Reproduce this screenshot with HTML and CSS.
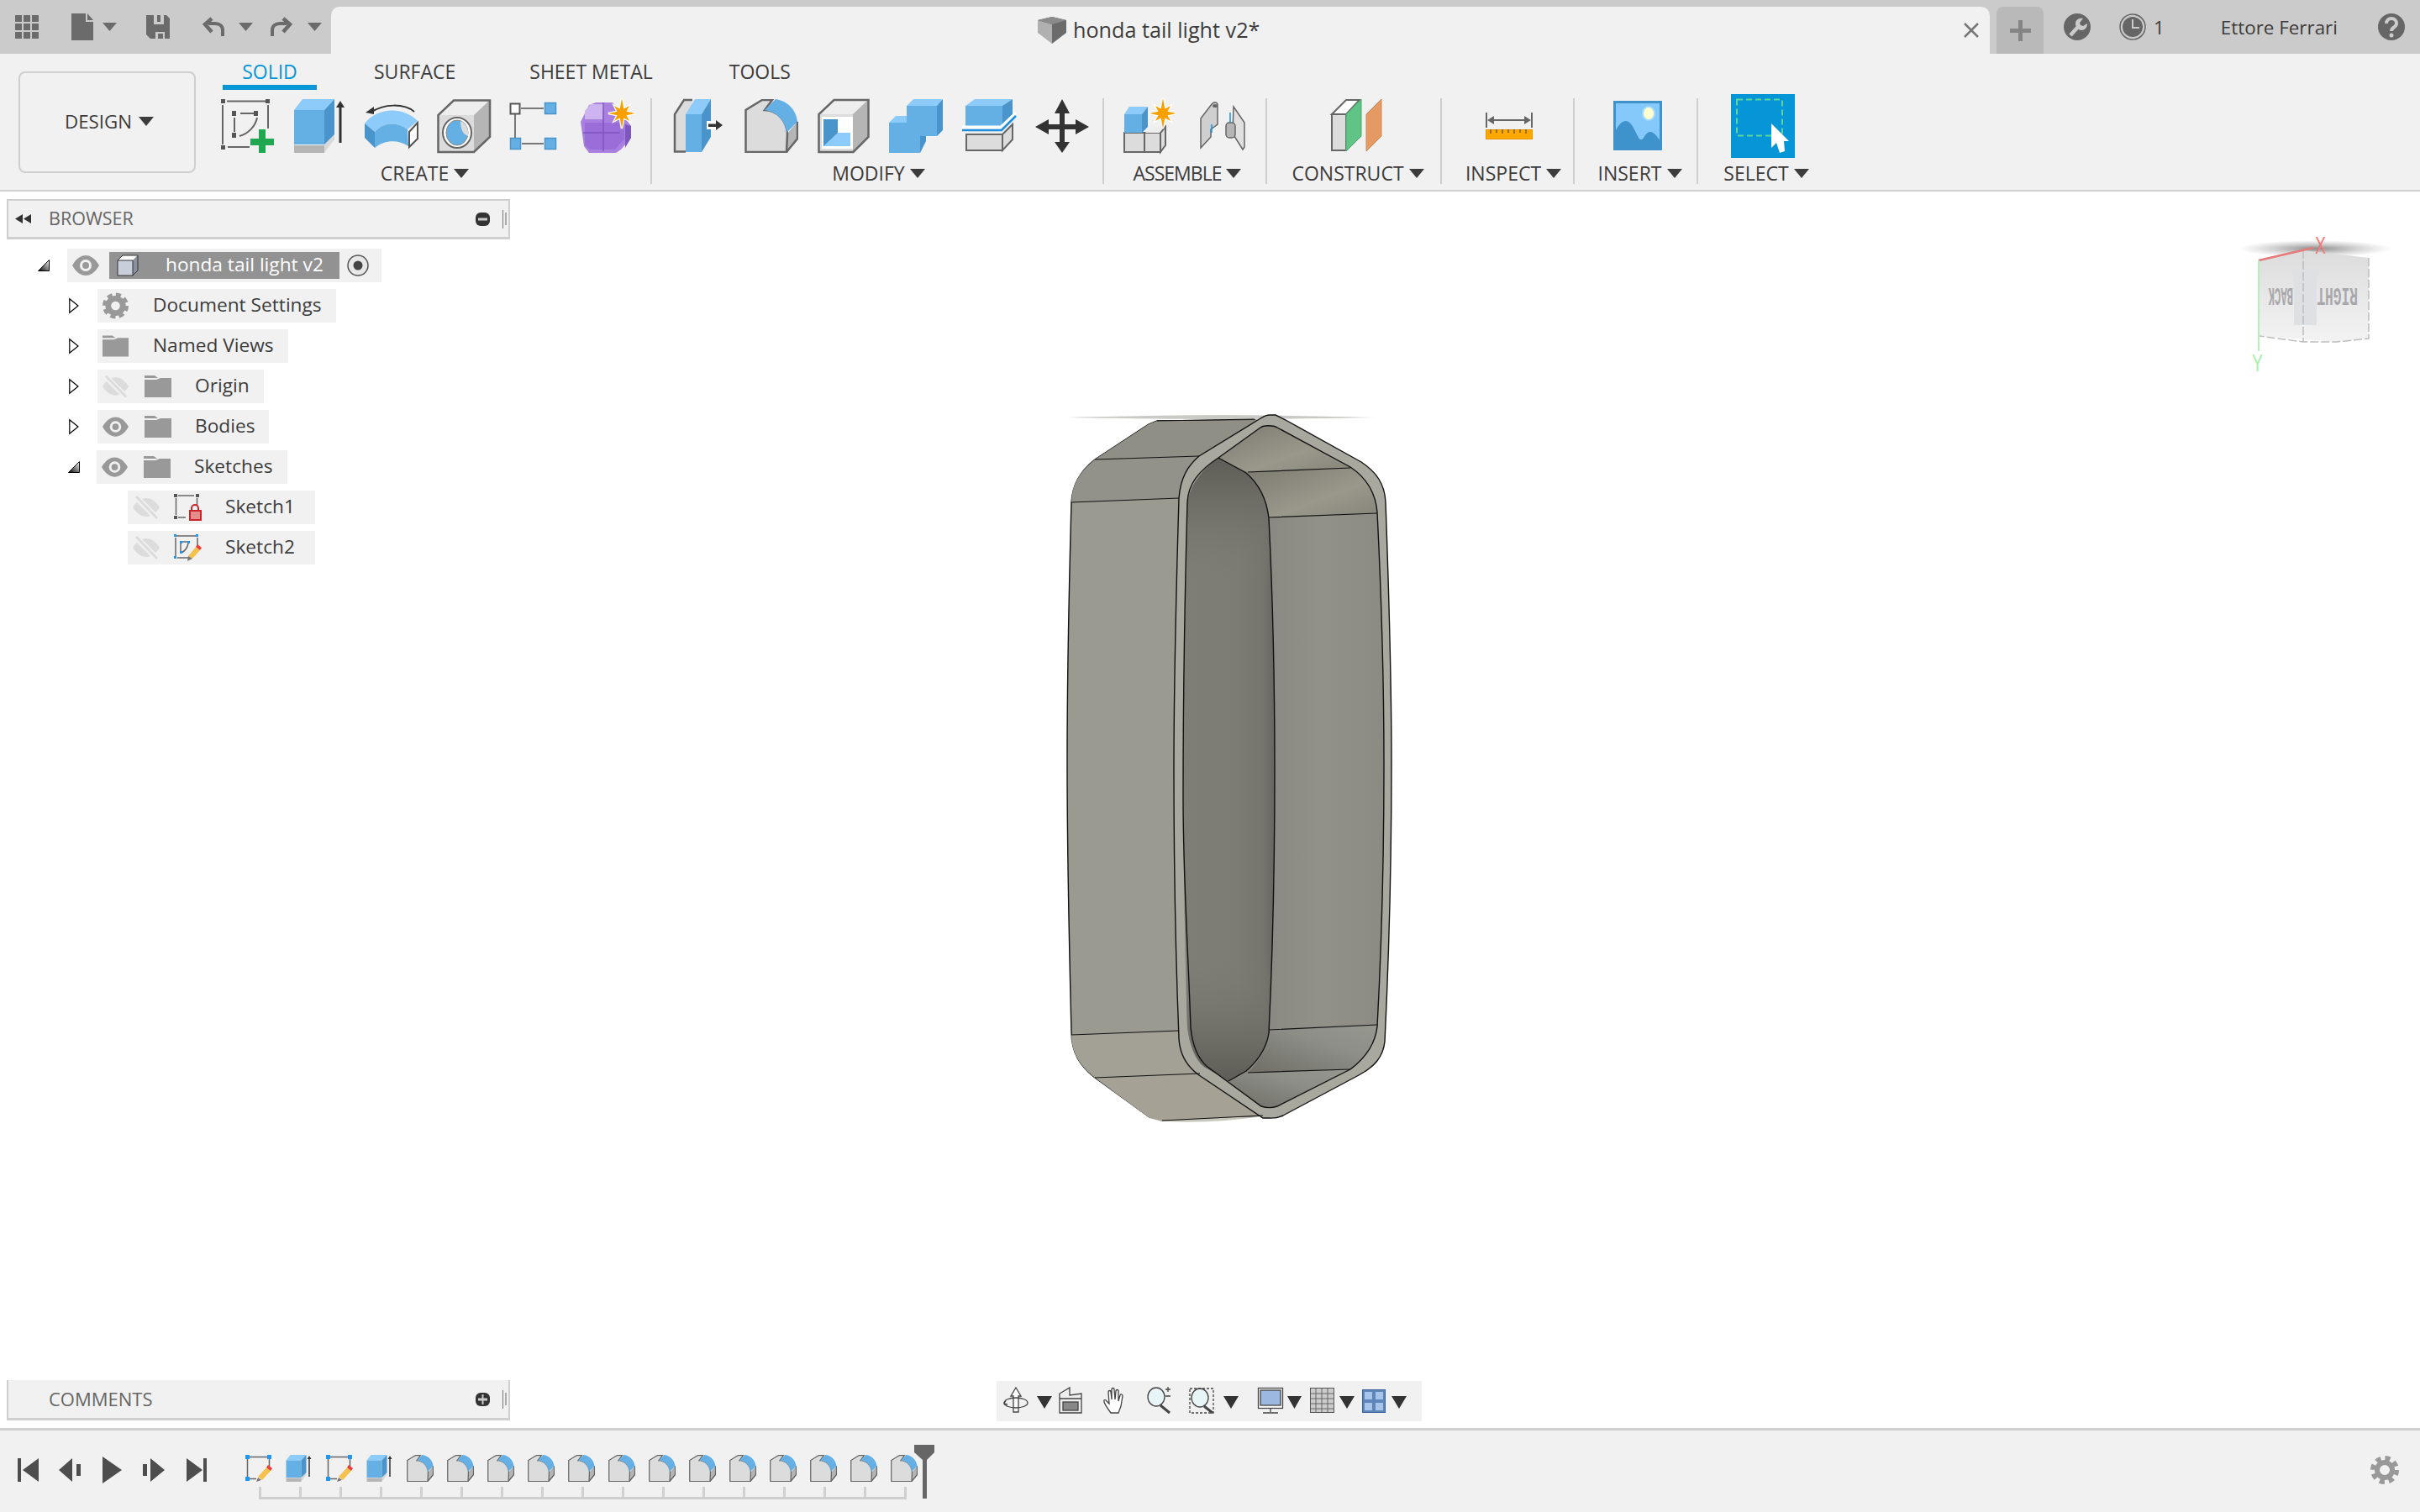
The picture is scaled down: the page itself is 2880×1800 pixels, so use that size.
FILE: index.html
```html
<!DOCTYPE html>
<html lang="en">
<head>
<meta charset="utf-8">
<title>honda tail light v2</title>
<link rel="stylesheet" href="styles.css">
</head>
<body>
<svg class="defs" width="0" height="0" aria-hidden="true">
  <defs>
    <linearGradient id="tri-grad" x1="1" y1="0" x2="0" y2="1"><stop offset="0" stop-color="#fff"/><stop offset="1" stop-color="#000"/></linearGradient>
    <linearGradient id="cyl" x1="0" y1="0" x2="1" y2="0"><stop offset="0" stop-color="#7f7e76"/><stop offset=".6" stop-color="#7d7c74"/><stop offset=".88" stop-color="#75746d"/><stop offset="1" stop-color="#66655f"/></linearGradient>
    <linearGradient id="cylv" x1="0" y1="0" x2="0" y2="1"><stop offset="0" stop-color="#5e5d57"/><stop offset=".07" stop-color="#6e6d66"/><stop offset=".2" stop-color="#7d7c74" stop-opacity="0"/><stop offset=".8" stop-color="#7d7c74" stop-opacity="0"/><stop offset=".93" stop-color="#6e6d66"/><stop offset="1" stop-color="#5e5d57"/></linearGradient>
    <linearGradient id="rface" x1="0" y1="0" x2="1" y2="0"><stop offset="0" stop-color="#74736c"/><stop offset=".3" stop-color="#878680"/><stop offset=".7" stop-color="#91918a"/><stop offset="1" stop-color="#8b8a83"/></linearGradient>
    <linearGradient id="rtop" x1="0" y1="0" x2="1" y2="1"><stop offset="0" stop-color="#7d7b71"/><stop offset=".6" stop-color="#9a988b"/><stop offset="1" stop-color="#85847a"/></linearGradient>
    <linearGradient id="rbot" x1="0" y1="1" x2="1" y2="0"><stop offset="0" stop-color="#6e6d66"/><stop offset=".6" stop-color="#8d8e88"/><stop offset="1" stop-color="#96978f"/></linearGradient>
    <radialGradient id="shadow"><stop offset="0" stop-color="#777" stop-opacity=".85"/><stop offset="1" stop-color="#999" stop-opacity="0"/></radialGradient>
    <linearGradient id="cubeface" x1="0" y1="0" x2="0" y2="1"><stop offset="0" stop-color="#dcdcdc"/><stop offset="1" stop-color="#f3f3f3"/></linearGradient>
    <path id="s-star" d="M16 0 5.500 2.300 9 9 2.300 5.500 0 18-2.300 5.500-9 9-5.500 2.300-16 0-5.500-2.300-9-9-2.300-5.500 0-18 2.300-5.500 9-9 5.500-2.300z"/>
    <symbol id="s-extrude" viewBox="0 0 62 64">
      <path fill="#d9d9d9" d="M36 64 48 48V42L36 54z"/><path fill="#b5b5b5" d="M0 55h36v9H0z"/>
      <path fill="#8ccbfa" d="M0 13 10 0h38L36 13z"/><path fill="#64afe4" d="M0 13h36v41H0z"/><path fill="#4a94cc" d="M36 13 48 0v42L36 54z"/>
      <path fill="#333" d="M53.500 52V10h3v42zM50 10l5-8 5 8z"/>
    </symbol>
    <symbol id="s-fillet" viewBox="0 0 64 64">
      <path fill="#b5b5b5" d="M50 42 64 26v22L50 64z"/>
      <path fill="#dcdcdc" stroke="#666" stroke-width="2.500" d="M1.500 63V13L21 1h12l-9 12c14 0 26 12 27 28l-1 22z"/>
      <path fill="#64afe4" d="M37 0c14 2 25 13 26 27L50 40C49 26 38 15 24 13z"/>
      <path fill="none" stroke="#666" stroke-width="2.500" d="M50 63 63 47V27"/>
    </symbol>
    <symbol id="s-sketch" viewBox="0 0 32 32">
      <path stroke="#666" stroke-width="1.500" fill="none" d="M5 2.500h21M2.500 5v22M5 28.500h8M28.500 5v12"/>
      <path fill="#2196f3" d="M0 0h5v5H0zM26 0h5v5h-5zM0 26h5v5H0z"/>
      <path fill="#777" d="m13 32 2-5 4 3z"/><path fill="#f5c14e" d="m15 26 10-11 5 4-10 11z"/><path fill="#ee3b3b" d="m25 15 2-3 5 4-2 3z"/>
    </symbol>
  </defs>
</svg>
<div class="app">
  <header class="topbar">
    <svg class="quick" width="394" height="64" viewBox="0 0 394 64">
      <g fill="#6b6b6b">
        <path d="M18 18h8v8h-8zM28 18h8v8h-8zM38 18h8v8h-8zM18 28h8v8h-8zM28 28h8v8h-8zM38 28h8v8h-8zM18 38h8v8h-8zM28 38h8v8h-8zM38 38h8v8h-8z"/>
        <path d="M85 16h17v10h9v22H85zM104 16l7 8h-7z"/>
        <path d="M122 27h17l-8.500 10z"/>
        <path fill-rule="evenodd" d="M174 18h24l4 4v24h-23l-5-5zm9 0v11h12V18h-4v8h-4v-8zm2 20v8h3v-6h6v6h2v-8z"/>
        <path d="M284 27h17l-8.500 10z"/><path d="M366 27h17l-8.500 10z"/>
      </g>
      <g fill="none" stroke="#6b6b6b" stroke-width="4">
        <path d="M265 43V36c0-5-4-8-9-8h-8"/><path d="M252 22l-8 7 8 9" stroke-width="4.500"/>
        <path d="M324 43V36c0-5 4-8 9-8h8"/><path d="M337 22l8 7-8 9" stroke-width="4.500"/>
      </g>
    </svg>
    <div class="doc-tab">
      <div class="doc-title">
        <svg width="34" height="32" viewBox="0 0 34 32"><path fill="#6b6b6b" d="M0 4 17 0l17 4v15L17 32z"/><path fill="#b0b0b0" d="M0 4 17 9v23L0 19z"/><path fill="#8b8b8b" d="M0 4 17 0l17 4-17 5z"/></svg>
        <span>honda tail light v2*</span>
      </div>
      <svg width="18" height="18" viewBox="0 0 18 18"><path stroke="#777" stroke-width="2.500" d="M1 1l16 16M17 1 1 17"/></svg>
    </div>
    <div class="new-tab"><svg width="25" height="25" viewBox="0 0 25 25"><path fill="#858585" d="M10 0h5v10h10v5H15v10h-5V15H0v-5h10z"/></svg></div>
    <div class="account">
      <svg class="acc-wrench" width="32" height="32" viewBox="0 0 32 32"><circle cx="16" cy="16" r="16" fill="#666"/><path fill="none" stroke="#cbcbcb" stroke-width="4.500" d="M8 26l9-10"/><path fill="#cbcbcb" d="M14 12c0-4 4-7 9-6l-4 5 1 3 3 1 5-3c0 5-3 8-7 8-3 0-7-3-7-8z"/></svg>
      <svg class="acc-clock" width="32" height="32" viewBox="0 0 32 32"><circle cx="16" cy="16" r="15" fill="none" stroke="#666" stroke-width="1.500"/><circle cx="16" cy="16" r="12" fill="#666"/><path fill="none" stroke="#cbcbcb" stroke-width="2" d="M16 7v10h8"/></svg>
      <span class="acc-count">1</span>
      <span class="acc-name">Ettore Ferrari</span>
      <svg class="acc-help" width="32" height="32" viewBox="0 0 32 32"><circle cx="16" cy="16" r="16" fill="#666"/><path fill="none" stroke="#cbcbcb" stroke-width="4" d="M10 12c0-4 3-6 6-6s6 2 6 6c0 5-6 4-6 9"/><circle cx="16" cy="26" r="2.500" fill="#cbcbcb"/></svg>
    </div>
  </header>

  <section class="toolbar">
    <button class="design"><span>DESIGN</span><i class="tri"></i></button>
    <div class="tools">
      <nav class="tabs">
        <span class="tab active">SOLID</span>
        <span class="tab tab-surface">SURFACE</span>
        <span class="tab tab-sheet">SHEET METAL</span>
        <span class="tab tab-tools">TOOLS</span>
      </nav>
      <div class="ribbon">
        <div class="group g-create">
          <div class="icons">
            <svg width="64" height="64" viewBox="263 118 64 64"><path fill="none" stroke="#666" stroke-width="2" d="M270 120.500h46M265 125v47M271 175h26M319 125v28M286 135h17M279 140v17"/><path fill="#555" d="M263 118h5v5h-5zM316 118h5v5h-5zM263 173h5v5h-5zM276 132h5v6h-5zM302 132h5v6h-5zM276 158h5v6h-5z"/><path fill="none" stroke="#666" stroke-width="2" d="M306 140c-2 10-10 19-21 22"/><path fill="#1fa84f" d="M308 154h8v11h10v8h-10v9h-8v-9h-10v-8h10z"/></svg>
            <svg width="62" height="64"><use href="#s-extrude"/></svg>
            <svg width="63" height="64" viewBox="434 118 63 64"><path fill="none" stroke="#333" stroke-width="2" d="M493 133c-12-10-36-10-52 1"/><path fill="#333" d="m435 134 10-7 0 9z"/><path fill="#8ccbfa" d="M434 147c16-20 46-20 63-3l-12 10c-12-9-28-9-39 3z"/><path fill="#64afe4" d="M446 157c11-12 27-12 39-3l1 20c-12-8-28-8-40 2z"/><path fill="#4a94cc" d="M434 147l12 10v19l-12-12z"/><path fill="#fff" stroke="#555" stroke-width="2" d="M497 146v19l-10 10v-18z"/></svg>
            <svg width="64" height="64" viewBox="520 118 64 64"><path fill="#eee" d="M522 137l19-18h42l-19 18z"/><path fill="#dcdcdc" d="M522 137h42v44h-42z"/><path fill="#b5b5b5" d="M564 137l19-18v44l-19 18z"/><path fill="none" stroke="#666" stroke-width="2.500" d="M521.500 181V137L540 119.500h43V163l-19 18z"/><ellipse cx="544" cy="158" rx="17" ry="18" fill="#fff" stroke="#666" stroke-width="2"/><ellipse cx="544" cy="158" rx="13" ry="15" fill="#64afe4" stroke="#888"/><path fill="#dcdcdc" d="M548 144c0 10 3 16 9 18 1-8-2-15-9-18z"/></svg>
            <svg width="62" height="64" viewBox="606 118 62 64"><path fill="none" stroke="#777" stroke-width="2" d="M620 129h27M613 136v28M621 171h26"/><path fill="#fff" stroke="#555" stroke-width="2" d="M607.500 123.500h11v12h-11z"/><path fill="#64afe4" stroke="#4a94cc" stroke-width="1.500" d="M648.500 122.500h13v13h-13zM607.500 164.500h12v13h-12zM648.500 164.500h13v13h-13z"/></svg>
            <svg width="64" height="64" viewBox="691 118 64 64"><path fill="#a97fe0" d="M691 145l10-20 8-3h20l22 28v14l-12 14-6 4h-32l-6-8z"/><path fill="#cdb3ef" d="M696 132l7-8h16l-2 18h-21z"/><path fill="#9a6ed8" d="M696 146h41l6 4v16l-6 6-5 6h-30l-6-6z"/><path fill="#7e56bd" d="M744 148l7 2v14l-7 12z"/><path fill="none" stroke="#7e56bd" stroke-width="1.500" d="M694 158h44M718 122v58"/><use href="#s-star" x="740" y="135" fill="#f9a000" stroke="#fff" stroke-width="2.500" paint-order="stroke"/></svg>
          </div>
          <div class="label"><span>CREATE</span><i class="tri"></i></div>
        </div>
        <div class="group g-modify">
          <div class="icons">
            <svg width="61" height="64" viewBox="802 118 61 64"><path fill="#dcdcdc" stroke="#666" stroke-width="2.500" d="M816 180.500h-13V136l11-17h10"/><path fill="#8ccbfa" d="M816 136l11-18h19l-11 18z"/><path fill="#64afe4" d="M816 136h19v45h-19z"/><path fill="#4a94cc" d="M835 136l11-18v45l-11 18z"/><path fill="#fff" d="M841 144h14v10h-14z"/><path fill="#333" d="M843 147.500h9V143l8 6-8 6v-4h-9z"/></svg>
            <svg width="64" height="64"><use href="#s-fillet"/></svg>
            <svg width="62" height="64" viewBox="973 118 62 64"><path fill="#eee" d="M975 136l18-17h40l-18 17z"/><path fill="#dcdcdc" d="M974 136h41v45h-41z"/><path fill="#b5b5b5" d="M1015 136l18-17v44l-18 18z"/><path fill="none" stroke="#666" stroke-width="2.500" d="M974.500 181V136l18-17h41v44l-18 18z"/><path fill="#fff" d="M978 139h37v38h-37z"/><path fill="#4a94cc" d="M980 142h17v32h-17z"/><path fill="#8ccbfa" d="M980 174l17-16h15v16z"/></svg>
            <svg width="64" height="64" viewBox="1058 118 64 64"><path fill="#8ccbfa" d="M1058 146l8-8h13v8zM1079 126l8-8h35l-7 8z"/><path fill="#64afe4" d="M1058 146h37v36h-37zM1079 126h36v36h-36z"/><path fill="#4a94cc" d="M1115 126l7-8v37l-7 7zM1095 162h7v6l-7 14z"/></svg>
            <svg width="64" height="64" viewBox="1144 118 64 64"><path fill="#8ccbfa" d="M1148 126l11-8h45l-12 8z"/><path fill="#64afe4" d="M1148 126h44v24h-44z"/><path fill="#4a94cc" d="M1192 126l12-8v21l-12 11z"/><path fill="#eee" d="M1148 160l8-5h44l-8 5z"/><path fill="#dcdcdc" stroke="#666" stroke-width="2" d="M1149 160h43v19h-43zM1192 160l12-12v18l-12 13z"/><path fill="none" stroke="#fff" stroke-width="3" d="M1144 151h46l18-17"/><path fill="none" stroke="#1c8fe0" stroke-width="2.500" d="M1144 155h47l17-17"/></svg>
            <svg width="64" height="64" viewBox="1230 118 64 64"><path fill="#333" d="M1262 118l9 17h-6v13h13v-6l16 9-16 9v-6h-13v15h6l-9 13-9-13h6v-15h-13v6l-16-9 16-9v6h13v-13h-6z"/></svg>
          </div>
          <div class="label"><span>MODIFY</span><i class="tri"></i></div>
        </div>
        <div class="group g-assemble">
          <div class="icons">
            <svg width="63" height="64" viewBox="1338 118 63 64"><path fill="#dcdcdc" stroke="#666" stroke-width="2" d="M1339 158h24v23h-24zM1363 158h19v23h-19z"/><path fill="#dcdcdc" stroke="#666" stroke-width="2" d="M1382 158l6-7v22l-6 8z"/><path fill="#eee" d="M1364 158l7-8h16l-6 8z"/><path fill="#8ccbfa" d="M1339 136l6-9h22l-7 9z"/><path fill="#64afe4" d="M1339 136h21v22h-21z"/><path fill="#4a94cc" d="M1360 136l7-9v24l-7 7z"/><use href="#s-star" x="1385" y="135" fill="#f9a000" stroke="#fff" stroke-width="2.500" paint-order="stroke"/></svg>
            <svg width="56" height="64" viewBox="1428 118 56 64"><path fill="#cfcfcf" stroke="#666" stroke-width="1.500" d="M1430 176v-35l13-17c3-3 6-3 7 0v24l-8 6 0 9z"/><ellipse cx="1447" cy="126" rx="3" ry="2" fill="#666"/><path fill="#e0e0e0" stroke="#666" stroke-width="1.500" d="M1469 127l13 19v29l-2 3-12-19z"/><rect x="1460" y="146" width="11" height="18" rx="4" fill="#b5b5b5" stroke="#666" stroke-width="1.500"/><path stroke="#1c8fe0" stroke-width="1.500" fill="none" d="M1465 134v12M1443 148v10"/></svg>
          </div>
          <div class="label"><span>ASSEMBLE</span><i class="tri"></i></div>
        </div>
        <div class="group g-construct">
          <div class="icons">
            <svg width="60" height="64" viewBox="1584 118 60 64"><path fill="#fff" stroke="#666" stroke-width="2" d="M1585 136l17-17h16l-16 17z"/><path fill="#dcdcdc" stroke="#666" stroke-width="2" d="M1585 136h17v43h-17z"/><path fill="#5fc485" stroke="#4aa86e" d="M1602 136l18-18v44l-18 18z"/><path fill="#e59a63" stroke="#cf8852" d="M1626 136l18-18v44l-18 18z"/></svg>
          </div>
          <div class="label"><span>CONSTRUCT</span><i class="tri"></i></div>
        </div>
        <div class="group g-inspect">
          <div class="icons">
            <svg width="56" height="64" viewBox="1768 118 56 64"><path fill="none" stroke="#666" stroke-width="2" d="M1769 134v18M1823 134v18M1772 143h48"/><path fill="#666" d="m1770 143 8-5v10zM1822 143l-8-5v10z"/><rect x="1768.500" y="154.500" width="55" height="11" fill="#ffa800" stroke="#e09400"/><path stroke="#7a5a10" stroke-width="1.500" d="M1774 154v5M1781 154v4M1788 154v5M1795 154v4M1802 154v5M1809 154v4M1816 154v5"/></svg>
          </div>
          <div class="label"><span>INSPECT</span><i class="tri"></i></div>
        </div>
        <div class="group g-insert">
          <div class="icons">
            <svg width="58" height="64" viewBox="1920 118 58 64"><rect x="1921.500" y="121.500" width="55" height="56" fill="#85c9fb" stroke="#4092cb" stroke-width="3"/><ellipse cx="1962" cy="135" rx="7" ry="8" fill="#ffffd0" stroke="#a8dcfb" stroke-width="2"/><path fill="#3f93cd" d="M1922 157c4-8 8-13 13-13 6 0 10 10 15 20 2 3 4 3 6 0 3-5 5-7 8-7 5 0 9 7 12 11v9h-54z"/></svg>
          </div>
          <div class="label"><span>INSERT</span><i class="tri"></i></div>
        </div>
        <div class="group g-select">
          <div class="icons">
            <svg class="w-select" width="76" height="76" viewBox="2060 112 76 76"><rect x="2060" y="112" width="76" height="76" fill="#0696d7"/><rect x="2067" y="118.500" width="54" height="43" fill="none" stroke="#5fd39a" stroke-width="2" stroke-dasharray="7 4"/><path fill="#fff" d="M2108 147l21 21h-6l1 12-6 2-4-12-6 6z"/></svg>
          </div>
          <div class="label"><span>SELECT</span><i class="tri"></i></div>
        </div>
      </div>
    </div>
  </section>

  <main class="canvas">
    <svg class="model" width="410" height="870" viewBox="1260 480 410 870">
      <path d="M1268 497q130-3 185-3t184 3q-120 2-184 2t-185-2z" fill="#c9c9c6"/>
      <path d="M1385 1335q60 3 125-7l-125 3z" fill="#c9c8be"/>
      <!-- left outer face -->
      <path fill="#9a9a90" stroke="#111" stroke-width="1.400" d="M1275 598c1-20 10-37 28-51l64-42 10-4 116-1 10 2-96 91v636c0 0 0 0 0 0l96 99-120 4-15-2-65-47c-18-14-28-30-28-55-3-120-5-200-5-320 0-120 2-200 5-310z"/>
      <path fill="#a5a295" d="M1303 1283l125-5 75 50-120 7-15-4z"/>
      <path fill="#a3a195" d="M1275 1232l128-5 24 51-124 5c-18-14-28-30-28-51z"/>
      <path fill="#92928a" d="M1275 598l128-5 24-50-124 4c-18 14-28 31-28 51z"/>
      <path fill="#8f8f85" d="M1303 547l124-4 70-43-120 1-10 4z"/>
      <!-- rim -->
      <path fill="#a9a89e" stroke="#111" stroke-width="1.400" d="M1403 593c2-24 10-38 24-50l70-43c8-5 10-6 15-6h6l12 6 90 50c18 12 28 26 29 48 4 110 7 210 7 310 0 110-3 230-8 332-2 18-12 30-31 40l-90 48c-8 4-13 3-19 3h-5l-76-51c-14-10-23-24-24-44-4-100-6-200-6-320 0-120 3-220 6-323z"/>
      <!-- right inner walls -->
      <path fill="url(#rface)" d="M1450 545l50-36c4-3 15-3 20 0l87 47c18 12 30 28 32 54 5 100 8 200 8 300 0 110-3 220-8 312-2 18-12 36-32 51l-87 44c-6 2-13 2-19 0l-39-30-50-430z"/>
      <path fill="url(#rtop)" d="M1450 545l50-36c4-3 15-3 20 0l87 47-122 6z"/>
      <path fill="url(#rtop)" d="M1485 562l122-5c18 12 30 28 32 54l-129 5c-2-24-10-40-25-54z"/>
      <path fill="url(#rbot)" d="M1510 1226l129-6c-2 18-12 38-32 53l-122 4c14-14 23-30 25-51z"/>
      <path fill="url(#rbot)" d="M1485 1277l122-4-87 44c-6 2-13 2-19 0l-39-30z"/>
      <!-- central cylinder -->
      <path fill="url(#cyl)" d="M1450 545l33 18c14 12 24 28 27 54 5 100 7 200 7 300 0 110-2 210-7 313-3 18-12 32-27 45l-21 12-29-17c-10-8-17-24-20-47-3-100-5-200-5-316 0-110 3-210 5-305 2-22 14-40 37-57z"/>
      <path fill="url(#cylv)" d="M1450 545l33 18c14 12 24 28 27 54 5 100 7 200 7 300 0 110-2 210-7 313-3 18-12 32-27 45l-21 12-29-17c-10-8-17-24-20-47-3-100-5-200-5-316 0-110 3-210 5-305 2-22 14-40 37-57z"/>
      <g fill="none" stroke="#111" stroke-width="1.400">
        <path d="M1450 545l33 18c14 12 24 28 27 54 5 100 7 200 7 300 0 110-2 210-7 313-3 18-12 32-27 45l-21 12"/>
        <path d="M1413 598c1-22 14-38 37-53l50-36c4-3 15-3 20 0l87 47c18 12 30 28 32 54 5 100 8 200 8 300 0 110-3 220-8 312-2 18-12 36-32 51l-87 44c-6 2-13 2-19 0l-64-47c-12-10-18-26-20-47-3-90-9-180-9-273 0-120 2-240 5-352z"/>
        <path stroke-width="1.200" d="M1275 598l128-5M1303 547l124-4M1377 501l116-2M1485 562l122-5M1510 616l129-5M1275 1232l128-5M1303 1283l125-5M1383 1334l120-6M1510 1226l129-6M1485 1277l122-4"/>
      </g>
    </svg>

    <svg class="viewcube" width="190" height="165" viewBox="2660 280 190 165">
      <ellipse cx="2755" cy="296" rx="91" ry="10" fill="url(#shadow)"/>
      <path fill="url(#cubeface)" d="M2688 310l53-12 78 9v96l-38 4-40-3-52-4z"/>
      <rect x="2730" y="319" width="27" height="68" fill="#dfe0e3"/>
      <path fill="none" stroke="#bdbdbd" stroke-dasharray="10 3" stroke-width="1.500" d="M2741 298v109M2819 307v96l-38 4-40 0-52-7"/>
      <text class="cube-text" transform="translate(2806 343) rotate(180) scale(.9 1.650)" x="0" y="0">RIGHT</text>
      <text class="cube-text cube-small" transform="translate(2729 343) rotate(180) scale(.72 1.750)" x="0" y="0">BACK</text>
      <path stroke="#e67a7a" stroke-width="2.500" d="M2688 310l65-15"/>
      <path stroke="#b6f0b6" stroke-width="2" d="M2688 310v108"/>
      <text class="axis axis-x" transform="translate(2755 302) scale(.65 1)" x="0" y="0">X</text>
      <text class="axis axis-y" transform="translate(2680 442) scale(.65 1)" x="0" y="0">Y</text>
    </svg>

    <aside class="side">
      <div class="browser">
        <div class="panel-head">
          <svg class="head-rewind" width="19" height="11" viewBox="0 0 19 11"><path fill="#333" d="M0 5.500 9 0v11zM10 5.500 19 0v11z"/></svg>
          <span class="panel-title">BROWSER</span>
          <svg class="head-btn" width="17" height="16" viewBox="0 0 17 16"><rect width="17" height="16" rx="6" fill="#333"/><path fill="#ccc" d="M3 6.500h11v3H3z"/></svg>
          <svg class="head-split" width="5" height="22" viewBox="0 0 5 22"><path fill="#777" d="M0 0h1v22H0z"/><path fill="#aaa" d="M3 3h2v15H3z"/></svg>
        </div>
        <ul class="tree">
          <li class="row lvl0">
            <svg class="disc-open" width="14" height="14" viewBox="0 0 14 14"><path fill="url(#tri-grad)" stroke="#000" d="M13.500 .5v13H.5z"/></svg>
            <div class="pill pill-root">
              <svg class="eye" width="32" height="24" viewBox="0 0 32 24"><path fill="#999" fill-rule="evenodd" d="M0 12C5 3 11 0 16 0s11 3 16 12c-5 9-11 12-16 12S5 21 0 12zm16-7a7 7 0 1 0 0 14 7 7 0 0 0 0-14zm0 3a4 4 0 1 1 0 8 4 4 0 0 1 0-8z"/></svg>
              <div class="selected">
                <svg width="26" height="26" viewBox="0 0 26 26"><path fill="#fff" d="M1 7l6-6h18L19 7z"/><path fill="#c9cfda" d="M1 7h18v18H1z"/><path fill="#8b90a0" d="M19 7l6-6v18l-6 6z"/><path fill="none" stroke="#333" d="M1 7l6-6h18v18l-6 6H1zM1 7h18v18"/></svg>
                <span>honda tail light v2</span>
              </div>
              <svg class="radio" width="26" height="26" viewBox="0 0 26 26"><circle cx="13" cy="13" r="12" fill="#e8e8e8" stroke="#555" stroke-width="1.500"/><circle cx="13" cy="13" r="5.500" fill="#444"/></svg>
            </div>
          </li>
          <li class="row lvl1">
            <svg class="disc" width="12" height="18" viewBox="0 0 12 18"><path fill="#fff" stroke="#000" stroke-width="1.200" d="M.8.8 11 9 .8 17.200z"/></svg>
            <div class="pill">
              <svg width="31" height="32" viewBox="0 0 32 32"><circle cx="16" cy="16" r="9" fill="none" stroke="#999" stroke-width="7"/><circle cx="16" cy="16" r="13" fill="none" stroke="#999" stroke-width="6" stroke-dasharray="6 4.200"/></svg>
              <span class="name name-noeye">Document Settings</span>
            </div>
          </li>
          <li class="row lvl1">
            <svg class="disc" width="12" height="18" viewBox="0 0 12 18"><path fill="#fff" stroke="#000" stroke-width="1.200" d="M.8.8 11 9 .8 17.200z"/></svg>
            <div class="pill">
              <svg width="31" height="26" viewBox="0 0 32 26"><path fill="#999" d="M0 0h12l4 3H0zM0 5h14l5-2h13v23H0z"/></svg>
              <span class="name name-noeye">Named Views</span>
            </div>
          </li>
          <li class="row lvl1">
            <svg class="disc" width="12" height="18" viewBox="0 0 12 18"><path fill="#fff" stroke="#000" stroke-width="1.200" d="M.8.8 11 9 .8 17.200z"/></svg>
            <div class="pill">
              <svg class="eye-off" width="31" height="26" viewBox="0 0 32 26"><path fill="#dcdcdc" d="M0 13C5 5 11 2 16 2s11 3 16 11c-5 8-11 11-16 11S5 21 0 13z"/><path stroke="#f1f1f1" stroke-width="7" d="M3 0l26 26"/><path stroke="#dcdcdc" stroke-width="3" d="M4 0l25 26"/></svg>
              <svg class="folder" width="32" height="26" viewBox="0 0 32 26"><path fill="#999" d="M0 0h12l4 3H0zM0 5h14l5-2h13v23H0z"/></svg>
              <span class="name">Origin</span>
            </div>
          </li>
          <li class="row lvl1">
            <svg class="disc" width="12" height="18" viewBox="0 0 12 18"><path fill="#fff" stroke="#000" stroke-width="1.200" d="M.8.8 11 9 .8 17.200z"/></svg>
            <div class="pill">
              <svg width="31" height="24" viewBox="0 0 32 24"><path fill="#999" fill-rule="evenodd" d="M0 12C5 3 11 0 16 0s11 3 16 12c-5 9-11 12-16 12S5 21 0 12zm16-7a7 7 0 1 0 0 14 7 7 0 0 0 0-14zm0 3a4 4 0 1 1 0 8 4 4 0 0 1 0-8z"/></svg>
              <svg class="folder" width="32" height="26" viewBox="0 0 32 26"><path fill="#999" d="M0 0h12l4 3H0zM0 5h14l5-2h13v23H0z"/></svg>
              <span class="name">Bodies</span>
            </div>
          </li>
          <li class="row lvl1">
            <svg class="disc-open disc-open-1" width="14" height="14" viewBox="0 0 14 14"><path fill="url(#tri-grad)" stroke="#000" d="M13.500 .5v13H.5z"/></svg>
            <div class="pill">
              <svg width="31" height="24" viewBox="0 0 32 24"><path fill="#999" fill-rule="evenodd" d="M0 12C5 3 11 0 16 0s11 3 16 12c-5 9-11 12-16 12S5 21 0 12zm16-7a7 7 0 1 0 0 14 7 7 0 0 0 0-14zm0 3a4 4 0 1 1 0 8 4 4 0 0 1 0-8z"/></svg>
              <svg class="folder" width="32" height="26" viewBox="0 0 32 26"><path fill="#999" d="M0 0h12l4 3H0zM0 5h14l5-2h13v23H0z"/></svg>
              <span class="name">Sketches</span>
            </div>
          </li>
          <li class="row lvl2">
            <div class="pill pill-sketch">
              <svg width="32" height="26" viewBox="0 0 32 26"><path fill="#dcdcdc" d="M0 13C5 5 11 2 16 2s11 3 16 11c-5 8-11 11-16 11S5 21 0 13z"/><path stroke="#f1f1f1" stroke-width="7" d="M3 0l26 26"/><path stroke="#dcdcdc" stroke-width="3" d="M4 0l25 26"/></svg>
              <svg class="sk-icon" width="33" height="32" viewBox="0 0 33 32"><path fill="none" stroke="#666" stroke-width="1.500" d="M5 2h19M2.500 5v20M5 28h9M27.500 5v9"/><path fill="#555" d="M0 0h4v4H0zM26 0h4v4h-4zM0 26h4v4H0z"/><path fill="none" stroke="#c9252c" stroke-width="2" d="M21 20v-3a4 4 0 0 1 8 0v3"/><path fill="#e78b8b" stroke="#c9252c" stroke-width="2" d="M19 20h13v11H19z"/></svg>
              <span class="name">Sketch1</span>
            </div>
          </li>
          <li class="row lvl2">
            <div class="pill pill-sketch">
              <svg width="32" height="26" viewBox="0 0 32 26"><path fill="#dcdcdc" d="M0 13C5 5 11 2 16 2s11 3 16 11c-5 8-11 11-16 11S5 21 0 13z"/><path stroke="#f1f1f1" stroke-width="7" d="M3 0l26 26"/><path stroke="#dcdcdc" stroke-width="3" d="M4 0l25 26"/></svg>
              <svg class="sk-icon" width="33" height="32" viewBox="0 0 33 32"><path fill="none" stroke="#666" stroke-width="1.500" d="M2 2h26M2 4v24M4 28h14M28 4v12M8 9h9M8 9v12M17 11c-1 5-4 9-8 11"/><path fill="#2196f3" d="M0 0h3v3H0zM26 0h3v3h-3zM0 26h3v3H0zM7 8h3v3H7zM16 8h3v3h-3zM7 20h3v3H7z"/><path fill="#f5c14e" d="m17 26 9-11 5 4-9 10z"/><path fill="#ee3b3b" d="m26 15 2-3 5 4-2 3z"/><path fill="#777" d="m16 32 1-6 5 3z"/></svg>
              <span class="name">Sketch2</span>
            </div>
          </li>
        </ul>
      </div>
      <div class="panel-head comments">
        <span class="panel-title">COMMENTS</span>
        <svg class="head-btn" width="17" height="16" viewBox="0 0 17 16"><rect width="17" height="16" rx="6" fill="#333"/><path fill="#ccc" d="M3 6.500h4.500V2h2v4.500H14v3H9.500V14h-2V9.500H3z"/></svg>
        <svg class="head-split" width="5" height="22" viewBox="0 0 5 22"><path fill="#777" d="M0 0h1v22H0z"/><path fill="#aaa" d="M3 3h2v15H3z"/></svg>
      </div>
    </aside>

    <div class="navbar">
      <svg width="506" height="48" viewBox="1186 1644 506 48">
        <g fill="#333"><path d="M1234 1662h18l-9 15zM1456 1662h18l-9 15zM1532 1662h17l-8.500 15zM1594 1662h18l-9 15zM1656 1662h18l-9 15z"/></g>
        <g fill="none" stroke="#444" stroke-width="1.300">
          <path fill="#fff" d="M1209 1652l6 10h-3v19h-6v-19h-3z"/>
          <ellipse cx="1209" cy="1670" rx="14" ry="6"/>
          <path d="M1197 1667l-2 4 4 1"/>
          <path fill="#eee" d="M1261 1665h26v17h-26zM1261 1665v-6l12-7v9l14-2v6"/>
          <rect x="1265" y="1669" width="18" height="10" fill="#888"/>
          <path fill="#fff" transform="translate(4 0)" d="M1318 1682c-3-4-7-10-8-13-1-3 2-3 3-1l3 3-1-14c0-2 3-2 3 0l1 9 0-12c0-2 3-2 3 0l1 12 1-10c0-2 3-2 3 0l0 12 2-7c1-2 3-1 3 1l-2 12-3 8z"/>
          <ellipse cx="1376" cy="1663" rx="10" ry="11" fill="#e8f5f7"/><path stroke-width="3" d="M1381 1673l11 9"/><path d="M1387 1654h6M1390 1651v6M1387 1662h6"/>
          <ellipse cx="1428" cy="1664" rx="10" ry="11" fill="#e8f5f7"/><path stroke-width="3" d="M1433 1674l10 8"/><path stroke-dasharray="3 2" d="M1416 1653h28v29h-28z"/>
          <rect x="1497.500" y="1652.500" width="29" height="24" fill="#fff"/><rect x="1500" y="1655" width="24" height="18" fill="#9cb8e0"/><path d="M1512 1677v4M1503 1682h18"/>
        </g>
        <g>
          <rect x="1559.500" y="1652.500" width="28" height="29" fill="#ccc" stroke="#555"/>
          <path stroke="#666" fill="none" d="M1566 1653v28M1573 1653v28M1580 1653v28M1560 1659h28M1560 1665h28M1560 1671h28M1560 1677h28"/>
          <rect x="1621.500" y="1654.500" width="27" height="27" fill="#5f86bb" stroke="#3e639b"/>
          <path fill="#a7c4ea" d="M1624 1657h9v9h-9zM1637 1657h9v9h-9zM1624 1670h9v9h-9zM1637 1670h9v9h-9z"/>
        </g>
      </svg>
    </div>
  </main>

  <footer class="timeline">
    <svg class="player" width="288" height="97" viewBox="0 1703 288 97">
      <g fill="#4d4d4d">
        <path d="M21 1736h4v28h-4zM46 1736v28l-19-14z"/>
        <path d="M70 1750l16-14v28zM91 1743h5v14h-5z"/>
        <path d="M122 1734l23 16-23 16z"/>
        <path d="M196 1750l-17-14v28zM170 1743h5v14h-5z"/>
        <path d="M242 1736h4v28h-4zM222 1736v28l19-14z"/>
      </g>
    </svg>
    <div class="track">
      <div class="steps">
        <svg width="48" height="32"><use href="#s-sketch" width="32" height="32"/></svg>
        <svg width="48" height="32"><use href="#s-extrude" width="32" height="32"/></svg>
        <svg width="48" height="32"><use href="#s-sketch" width="32" height="32"/></svg>
        <svg width="48" height="32"><use href="#s-extrude" width="32" height="32"/></svg>
        <svg width="48" height="32"><use href="#s-fillet" width="32" height="32"/></svg>
        <svg width="48" height="32"><use href="#s-fillet" width="32" height="32"/></svg>
        <svg width="48" height="32"><use href="#s-fillet" width="32" height="32"/></svg>
        <svg width="48" height="32"><use href="#s-fillet" width="32" height="32"/></svg>
        <svg width="48" height="32"><use href="#s-fillet" width="32" height="32"/></svg>
        <svg width="48" height="32"><use href="#s-fillet" width="32" height="32"/></svg>
        <svg width="48" height="32"><use href="#s-fillet" width="32" height="32"/></svg>
        <svg width="48" height="32"><use href="#s-fillet" width="32" height="32"/></svg>
        <svg width="48" height="32"><use href="#s-fillet" width="32" height="32"/></svg>
        <svg width="48" height="32"><use href="#s-fillet" width="32" height="32"/></svg>
        <svg width="48" height="32"><use href="#s-fillet" width="32" height="32"/></svg>
        <svg width="48" height="32"><use href="#s-fillet" width="32" height="32"/></svg>
        <svg width="48" height="32"><use href="#s-fillet" width="32" height="32"/></svg>
      </div>
      <div class="ruler"></div>
      <svg class="playhead" width="24" height="65" viewBox="0 0 24 65"><path fill="#666" d="M0 0h24v9l-9 9v46h-5V18L0 9z"/></svg>
    </div>
    <svg class="foot-gear" width="34" height="34" viewBox="0 0 34 34"><circle cx="17" cy="17" r="9" fill="none" stroke="#999" stroke-width="6"/><circle cx="17" cy="17" r="14" fill="none" stroke="#999" stroke-width="6" stroke-dasharray="6 5"/></svg>
  </footer>
</div>
</body>
</html>
```

FILE: styles.css
```css
* { box-sizing: border-box; }
html, body { margin: 0; padding: 0; height: 100%; }
body { font-family: "Open Sans", "Liberation Sans", sans-serif; color: #3c3c3c; background: #fff; overflow: hidden; }
svg { display: block; flex: none; overflow: visible; }
.defs { position: absolute; }
.app { display: flex; flex-direction: column; height: 1800px; width: 2880px; }

.topbar { display: flex; height: 64px; background: #cbcbcb; flex: none; }
.doc-tab { display: flex; align-items: center; justify-content: space-between; width: 1974px; height: 56px; margin-top: 8px; padding: 0 13px 0 841px; background: #f1f1f1; border-radius: 10px 10px 0 0; }
.doc-title { display: flex; align-items: center; gap: 8px; font-size: 25.200px; white-space: nowrap; }
.doc-title span { padding-bottom: 3px; }
.new-tab { display: flex; align-items: center; justify-content: center; width: 56px; height: 56px; margin: 8px 0 0 8px; background: #b9b9b9; border-radius: 8px 8px 0 0; }
.account { display: flex; align-items: center; font-size: 22.400px; }
.acc-wrench { margin-left: 24px; }
.acc-clock { margin-left: 34px; }
.acc-count { margin-left: 9px; }
.acc-name { margin-left: 67px; white-space: nowrap; }
.acc-help { margin-left: 48px; }

.toolbar { display: flex; flex: none; height: 164px; background: #f1f1f1; border-bottom: 2px solid #d0d0d0; }
.design { display: flex; align-items: center; justify-content: center; gap: 8px; width: 211px; height: 121px; margin: 21px 3px 0 22px; padding: 0 0 2px 5px; background: #f1f1f1; border: 2px solid #cfcfcf; border-radius: 8px; font: inherit; font-size: 22.300px; color: #3c3c3c; }
.tri { display: block; flex: none; width: 0; height: 0; border-left: 9px solid transparent; border-right: 9px solid transparent; border-top: 11px solid #3c3c3c; }
.tools { display: flex; flex-direction: column; flex: 1; }
.tabs { display: flex; height: 43px; margin-left: 29px; font-size: 23px; }
.tab { padding-top: 5px; white-space: nowrap; }
.tab.active { width: 112px; text-align: center; color: #0696d7; border-bottom: 6px solid #0696d7; }
.tab-surface { margin-left: 68px; }
.tab-sheet { margin-left: 88px; }
.tab-tools { margin-left: 91px; }

.ribbon { display: flex; height: 102px; margin-top: 10px; }
.group { display: flex; flex-direction: column; flex: none; border-right: 2px solid #cfcfcf; }
.icons { display: flex; height: 64px; margin-top: 1px; gap: 23px; }
.label { display: flex; align-items: center; justify-content: center; gap: 6px; height: 24px; margin-top: 12px; font-size: 23px; white-space: nowrap; }
.g-create { width: 540px; }
.g-create .icons { padding-left: 27px; gap: 22.500px; }
.g-create .label { padding-left: 1px; }
.g-modify { width: 538px; }
.g-modify .icons { padding-left: 26px; }
.g-modify .label { padding-left: 3px; }
.g-assemble { width: 194px; }
.g-assemble .icons { padding-left: 23px; gap: 27px; }
.g-assemble .label { padding-left: 6px; letter-spacing: -1px; }
.g-construct { width: 208px; }
.g-construct .icons { justify-content: center; padding-left: 6px; }
.g-construct .label { padding-left: 10px; }
.g-inspect { width: 158px; }
.g-inspect .icons { justify-content: center; padding-left: 4px; }
.g-inspect .label { padding-left: 14px; }
.g-insert { width: 147px; }
.g-insert .icons { justify-content: center; padding-left: 4px; }
.g-insert .label { padding-left: 10px; }
.g-select { width: 160px; border-right: 0; }
.g-select .icons { justify-content: center; padding-right: 6px; }
.g-select .label { padding-left: 2px; }
.w-select { margin-top: -6px; }

.canvas { position: relative; flex: 1; background: #fff; }
.model { position: absolute; left: 1260px; top: 252px; }
.viewcube { position: absolute; left: 2660px; top: 52px; }
.cube-text { font-family: "Liberation Mono", monospace; font-size: 18px; font-weight: 700; fill: #a8a8ac; }
.cube-small { font-size: 17px; }
.axis { font-size: 30px; font-family: "Liberation Sans", sans-serif; }
.axis-x { fill: #ef7a7a; }
.axis-y { fill: #a8f0a8; }

.side { position: absolute; left: 8px; top: 9px; bottom: 9px; width: 599px; display: flex; flex-direction: column; justify-content: space-between; }
.panel-head { display: flex; align-items: center; height: 48px; background: #f1f1f1; border: 2px solid #cfcfcf; border-bottom-width: 3px; font-size: 21.500px; color: #666; padding-left: 8px; }
.head-rewind { margin-right: 21px; }
.panel-title { flex: 1; padding-bottom: 2px; }
.head-btn { margin-right: 15px; }
.head-split { margin-right: 2px; }
.comments { padding-left: 48px; border-top: 0; font-size: 22px; }
.tree { list-style: none; margin: 11px 0 0; padding: 0; display: flex; flex-direction: column; gap: 8px; font-size: 22.700px; }
.row { display: flex; align-items: center; height: 40px; }
.lvl0 { padding-left: 37px; }
.lvl1 { padding-left: 74px; }
.lvl2 { padding-left: 144px; }
.disc-open { margin-right: 21px; }
.disc { margin-right: 22px; }
.disc-open-1 { margin-right: 20px; margin-left: -1px; }
.pill { display: flex; align-items: center; height: 40px; padding: 0 17px 0 6px; background: #f1f1f1; white-space: nowrap; }
.pill-root { padding-right: 15px; }
.selected { display: flex; align-items: center; height: 32px; margin-left: 12px; padding: 0 19px 0 9px; background: #929292; color: #fff; }
.selected span { margin-left: 32px; padding-bottom: 3px; }
.radio { margin-left: 9px; }
.name { margin-left: 28px; padding-bottom: 3px; }
.name-noeye { margin-left: 29px; }
.folder { margin-left: 19px; }
.pill-sketch { padding-right: 24px; }
.sk-icon { margin-left: 17px; }

.navbar { position: absolute; left: 1186px; bottom: 8px; width: 506px; height: 48px; background: #f1f1f1; }

.timeline { display: flex; flex: none; height: 100px; background: #f1f1f1; border-top: 3px solid #cfcfcf; }
.track { position: relative; width: 830px; padding: 29px 0 0 4px; }
.steps { display: flex; height: 32px; }
.ruler { width: 771px; height: 15px; margin: 6px 0 0 16px; border-bottom: 3px solid #cfcfcf; background: repeating-linear-gradient(90deg, #cfcfcf 0 3px, transparent 3px 48px); }
.playhead { position: absolute; left: 800px; top: 17px; }
.foot-gear { margin: 30px 25px 0 auto; }
```
